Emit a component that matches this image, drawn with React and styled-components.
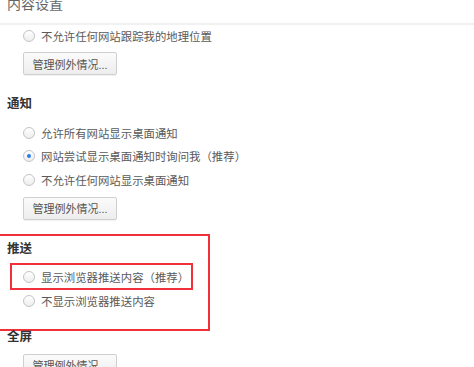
import React from 'react';
import styled, { createGlobalStyle } from 'styled-components';

const GlobalStyle = createGlobalStyle`
    html, body {
        margin: 0;
        padding: 0;
        background: #fff;
        overflow: hidden;
    }
    body {
        font-family: "Liberation Sans", "Noto Sans CJK SC", sans-serif;
    }
`

const Page = styled.div`
    margin-top: -6px;
    width: 474px;
    height: 373px;
    overflow: hidden;
    color: #555;
`

const Title = styled.div`
    padding-left: 7px;
    font-size: 14px;
    line-height: 20px;
    color: #666;
    padding-bottom: 9px;
    border-bottom: 2px solid #f1f1f1;
`

const Section = styled.section`
    position: relative;
    padding-left: 7px;
    margin-top: ${p => p.$gap}px;
`

const Heading = styled.h3`
    margin: 0;
    font-size: 12.5px;
    line-height: 20px;
    font-weight: 700;
    color: #333;
`

const Options = styled.div`
    display: flex;
    flex-direction: column;
    margin-top: ${p => p.$top}px;
    padding-left: 16px;
`

const Row = styled.label`
    position: relative;
    display: flex;
    align-items: center;
    gap: 6px;
    height: ${p => p.$h}px;
    font-size: 11.4px;
    color: #5a5a5a;
    white-space: nowrap;
`

const Radio = styled.span`
    position: relative;
    flex: none;
    width: 10px;
    height: 10px;
    border-radius: 50%;
    border: 1px solid #c4c4c4;
    background: linear-gradient(#ffffff, #ededed);

    &::after {
        content: '';
        display: ${p => (p.$on ? 'block' : 'none')};
        position: absolute;
        left: 3px;
        top: 3px;
        width: 4px;
        height: 4px;
        border-radius: 50%;
        background: #2b7de9;
    }
`

const Button = styled.button`
    display: block;
    margin: ${p => p.$top}px 0 0 16px;
    width: 94px;
    height: 23px;
    padding: 0;
    border: 1px solid #cfcfcf;
    border-radius: 2px;
    background: linear-gradient(#fbfbfb, #ededed);
    box-shadow: 0 1px 0 rgba(0, 0, 0, 0.05);
    font-family: inherit;
    font-size: 11px;
    color: #555;
`

// red annotation frames drawn over the settings
const Highlight = styled.div`
    position: absolute;
    top: ${p => p.$top}px;
    left: ${p => p.$left}px;
    width: ${p => p.$width}px;
    bottom: ${p => p.$bottom}px;
    border: 2px solid #f0313a;
    pointer-events: none;
`

const Option = ({ on, h = 23.5, children, mark }) => (
    <Row $h={h}>
        <Radio $on={on} />
        {children}
        {mark && <Highlight $top={-3} $left={-13} $width={179} $bottom={-1} />}
    </Row>
)

const App = () => {
    return (
        <>
            <GlobalStyle />
            <Page>
                <Title>内容设置</Title>
                <Section $gap={0}>
                    <Options $top={0}>
                        <Option h={22}>不允许任何网站跟踪我的地理位置</Option>
                    </Options>
                    <Button $top={5}>管理例外情况...</Button>
                </Section>

                <Section $gap={19}>
                    <Heading>通知</Heading>
                    <Options $top={7}>
                        <Option>允许所有网站显示桌面通知</Option>
                        <Option on>网站尝试显示桌面通知时询问我（推荐）</Option>
                        <Option>不允许任何网站显示桌面通知</Option>
                    </Options>
                    <Button $top={5}>管理例外情况...</Button>
                </Section>

                <Section $gap={19}>
                    <Highlight $top={-5} $left={-10} $width={216} $bottom={-18} />
                    <Heading>推送</Heading>
                    <Options $top={7}>
                        <Option mark>显示浏览器推送内容（推荐）</Option>
                        <Option>不显示浏览器推送内容</Option>
                    </Options>
                </Section>

                <Section $gap={14}>
                    <Heading>全屏</Heading>
                    <Button $top={7}>管理例外情况...</Button>
                </Section>
            </Page>
        </>
    )
}

export default App
